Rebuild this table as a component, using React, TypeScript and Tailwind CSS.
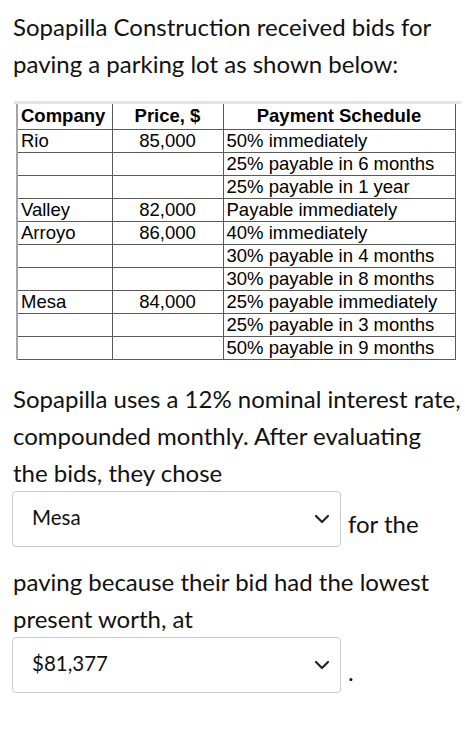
import { ChevronDown } from "lucide-react";

const bids: [string, string, string][] = [
  ["Rio", "85,000", "50% immediately"],
  ["", "", "25% payable in 6 months"],
  ["", "", "25% payable in 1 year"],
  ["Valley", "82,000", "Payable immediately"],
  ["Arroyo", "86,000", "40% immediately"],
  ["", "", "30% payable in 4 months"],
  ["", "", "30% payable in 8 months"],
  ["Mesa", "84,000", "25% payable immediately"],
  ["", "", "25% payable in 3 months"],
  ["", "", "50% payable in 9 months"],
];

const FakeSelect = ({ value }: { value: string }) => (
  <div className="flex h-[56px] w-[329px] shrink-0 items-center justify-between rounded-[4px] border border-[#cbcbcb] bg-white pl-[19px] pr-[6px] text-[20.5px] text-[#111]">
    <span className="-mt-[2px]">{value}</span>
    <ChevronDown className="h-6 w-6 text-[#222]" strokeWidth={2.2} />
  </div>
);

const App = () => {
  return (
    <div className="min-h-screen bg-white pl-[13px] pr-[2px] pt-[8px] font-['Lato',sans-serif] text-[24px] leading-[37px] text-[#111]">
      <p>
        Sopapilla Construction received bids for
        <br />
        paving a parking lot as shown below:
      </p>

      {/* bids table */}
      <div className="mt-[19px] ml-[1px] w-[447px] border-t-[3px] border-[#e4e4e4]">
        <table className="ml-[2px] border-collapse font-['Liberation_Sans',Arial,sans-serif] text-[18.5px] leading-[22px] text-black">
          <thead>
            <tr className="h-[25px]">
              <th className="w-[95px] border-x border-b border-[#5a5a5a] border-l-2 border-l-[#a6a6a6] px-[3px] text-left font-bold">
                Company
              </th>
              <th className="w-[111px] border-x border-b border-[#5a5a5a] text-center font-bold">
                Price, $
              </th>
              <th className="w-[232px] border-x border-b border-[#5a5a5a] text-center font-bold">
                Payment Schedule
              </th>
            </tr>
          </thead>
          <tbody>
            {bids.map(([company, price, schedule], i) => (
              <tr key={i} className="h-[23px]">
                <td className="border border-[#5a5a5a] border-l-2 border-l-[#a6a6a6] px-[3px] font-normal">
                  {company}
                </td>
                <td className="border border-[#5a5a5a] text-center">{price}</td>
                <td className="border border-[#5a5a5a] px-[3px]">{schedule}</td>
              </tr>
            ))}
          </tbody>
        </table>
      </div>

      <p className="mt-[20px]">
        Sopapilla uses a 12% nominal interest rate,
        <br />
        compounded monthly. After evaluating
        <br />
        the bids, they chose
      </p>

      <div className="-ml-[1px] flex items-end gap-[7px]">
        <FakeSelect value="Mesa" />
        <span className="mb-[5px]">for the</span>
      </div>

      <p className="mt-[16px]">
        paving because their bid had the lowest
        <br />
        present worth, at
      </p>

      <div className="-ml-[1px] flex items-end gap-[7px]">
        <FakeSelect value="$81,377" />
        <span className="mb-[3px]">.</span>
      </div>
    </div>
  );
};

export default App;
